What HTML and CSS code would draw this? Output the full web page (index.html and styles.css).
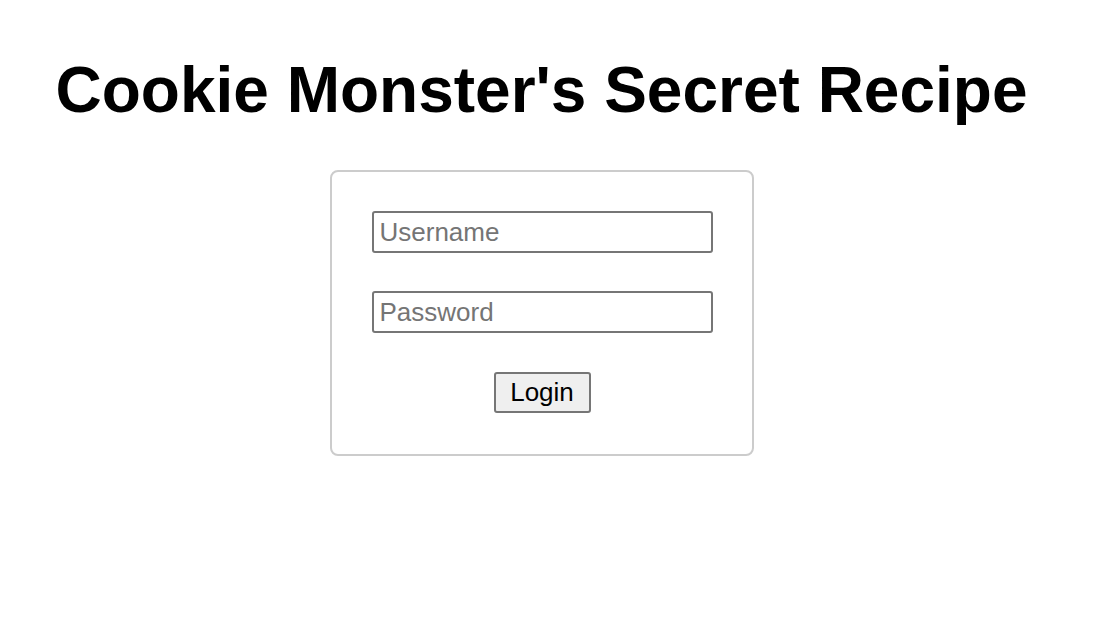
FILE: index.html
```html
<!DOCTYPE html>
<html lang="en">
<head>
    <meta charset="UTF-8">
    <meta name="viewport" content="width=device-width, initial-scale=1.0">
    <title>Cookie Monster's Secret Recipe</title>
    <link rel="stylesheet" href="styles.css">
</head>
<body>
    <div class="page">
        <h1>Cookie Monster's Secret Recipe</h1>

        <form class="login-box" onsubmit="return false;">
            <input type="text" class="field" placeholder="Username">
            <input type="password" class="field" placeholder="Password">
            <button type="submit" class="login-btn">Login</button>
        </form>
    </div>
</body>
</html>
```

FILE: styles.css
```css
body {
    font-family: "Liberation Sans", Arial, sans-serif;
    margin: 0;
    background: #fff;
    color: #000;
}
.page {
    display: flex;
    flex-direction: column;
    align-items: center;
    padding-right: 28px;
}
h1 {
    font-size: 64px;
    font-weight: bold;
    margin: 53px 0 43px 0;
    line-height: 74px;
}
.login-box {
    width: 341px;
    padding: 39px 39px 41px 40px;
    border: 2px solid #ccc;
    border-radius: 8px;
    display: flex;
    flex-direction: column;
    align-items: center;
    gap: 38px;
}
.field {
    width: 100%;
    box-sizing: border-box;
    height: 42px;
    font-family: "Liberation Sans", Arial, sans-serif;
    font-size: 26px;
    padding: 1px 6px;
    border: 2px solid #767676;
    border-radius: 3px;
}
.field::placeholder {
    color: #757575;
}
.login-btn {
    margin-top: 1px;
    height: 41px;
    width: 97px;
    font-family: "Liberation Sans", Arial, sans-serif;
    font-size: 26px;
    color: #000;
    background: #efefef;
    border: 2px solid #767676;
    border-radius: 3px;
    padding: 0;
}
```
